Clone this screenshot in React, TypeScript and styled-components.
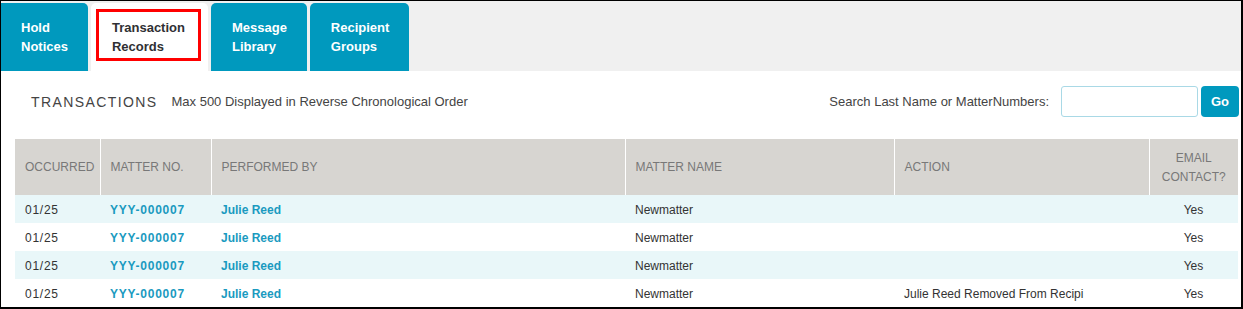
import React from "react";
import styled, { createGlobalStyle } from "styled-components";

const Global = createGlobalStyle`
  html, body { margin: 0; padding: 0; background: #fff; }
  body { font-family: "Liberation Sans", Arial, sans-serif; }
`;

const Frame = styled.div`
  width: 1243px;
  height: 309px;
  box-sizing: border-box;
  border-style: solid;
  border-color: #000;
  border-width: 1px 2px 2px 1px;
  background: #fff;
  overflow: hidden;
`;

const TabStrip = styled.div`
  display: flex;
  align-items: flex-end;
  gap: 3px;
  height: 70px;
  background: #f0f0f0;
  box-sizing: border-box;
`;

const Tab = styled.div<{ $active?: boolean; $first?: boolean }>`
  box-sizing: border-box;
  height: 68px;
  padding-top: 15px;
  padding-left: ${(p) => (p.$first ? "20px" : "21px")};
  padding-right: ${(p) => (p.$active ? "23px" : "20px")};
  border-radius: ${(p) => (p.$first ? "0 5px 0 0" : "5px 5px 0 0")};
  background: ${(p) => (p.$active ? "#fff" : "#0099be")};
  color: ${(p) => (p.$active ? "#2f3033" : "#fff")};
  font-weight: bold;
  font-size: 13px;
  line-height: 19px;
  position: relative;
`;

const Highlight = styled.div`
  position: absolute;
  left: 5px;
  top: 6px;
  width: 105px;
  height: 52px;
  box-sizing: border-box;
  border: 3px solid #f00;
`;

const Toolbar = styled.div`
  display: flex;
  align-items: center;
  height: 31px;
  margin: 15px 2px 22px 30px;
`;

const Title = styled.div`
  font-size: 14px;
  letter-spacing: 1.4px;
  color: #444;
  margin-right: 14px;
`;

const Subtitle = styled.div`
  font-size: 13px;
  color: #444;
  flex: 1;
`;

const SearchLabel = styled.label`
  font-size: 13px;
  color: #444;
  margin-right: 12px;
`;

const SearchInput = styled.input`
  box-sizing: border-box;
  width: 137px;
  height: 31px;
  border: 1px solid #a9d9e6;
  border-radius: 3px;
  margin: 0 3px 0 0;
  outline: none;
`;

const GoButton = styled.button`
  box-sizing: border-box;
  width: 38px;
  height: 31px;
  border: none;
  border-radius: 4px;
  background: #0099be;
  color: #fff;
  font-family: "Liberation Sans", Arial, sans-serif;
  font-weight: bold;
  font-size: 13px;
  padding: 0;
`;

const Table = styled.table`
  margin-left: 14px;
  width: 1223px;
  table-layout: fixed;
  border-collapse: collapse;
`;

const Th = styled.th<{ $center?: boolean }>`
  height: 56px;
  padding: 1px 10px 0;
  box-sizing: border-box;
  background: #d7d5d1;
  color: #787878;
  font-weight: normal;
  font-size: 12px;
  line-height: 19px;
  text-align: ${(p) => (p.$center ? "center" : "left")};
  border-left: 1px solid #fff;
  &:first-child { border-left: none; }
`;

const Tr = styled.tr<{ $alt?: boolean }>`
  background: ${(p) => (p.$alt ? "#e9f7f9" : "#fff")};
`;

const Td = styled.td<{ $center?: boolean; $link?: boolean; $digits?: boolean }>`
  box-sizing: border-box;
  height: 28px;
  padding: 2px 10px 0;
  font-size: 12px;
  font-weight: ${(p) => (p.$link ? "bold" : "normal")};
  color: ${(p) => (p.$link ? "#1a9ac0" : "#333")};
  letter-spacing: ${(p) => (p.$digits ? "0.75px" : "0")};
  text-align: ${(p) => (p.$center ? "center" : "left")};
  white-space: nowrap;
  overflow: hidden;
`;

const tabs = [
  ["Hold", "Notices"],
  ["Transaction", "Records"],
  ["Message", "Library"],
  ["Recipient", "Groups"],
];

const rows = [
  { action: "" },
  { action: "" },
  { action: "" },
  { action: "Julie Reed Removed From Recipi" },
];

export default function App() {
  return (
    <>
      <Global />
      <Frame>
        <TabStrip>
          {tabs.map((t, i) => (
            <Tab key={i} $first={i === 0} $active={i === 1}>
              {t[0]}
              <br />
              {t[1]}
              {i === 1 && <Highlight />}
            </Tab>
          ))}
        </TabStrip>
        <Toolbar>
          <Title>TRANSACTIONS</Title>
          <Subtitle>Max 500 Displayed in Reverse Chronological Order</Subtitle>
          <SearchLabel>Search Last Name or MatterNumbers:</SearchLabel>
          <SearchInput type="text" />
          <GoButton>Go</GoButton>
        </Toolbar>
        <Table>
          <colgroup>
            <col style={{ width: 85 }} />
            <col style={{ width: 111 }} />
            <col style={{ width: 414 }} />
            <col style={{ width: 269 }} />
            <col style={{ width: 255 }} />
            <col style={{ width: 89 }} />
          </colgroup>
          <thead>
            <tr>
              <Th>OCCURRED</Th>
              <Th>MATTER NO.</Th>
              <Th>PERFORMED BY</Th>
              <Th>MATTER NAME</Th>
              <Th>ACTION</Th>
              <Th $center>
                EMAIL
                <br />
                CONTACT?
              </Th>
            </tr>
          </thead>
          <tbody>
            {rows.map((r, i) => (
              <Tr key={i} $alt={i % 2 === 0}>
                <Td $digits>01/25</Td>
                <Td $link $digits>YYY-000007</Td>
                <Td $link>Julie Reed</Td>
                <Td>Newmatter</Td>
                <Td>{r.action}</Td>
                <Td $center>Yes</Td>
              </Tr>
            ))}
          </tbody>
        </Table>
      </Frame>
    </>
  );
}
